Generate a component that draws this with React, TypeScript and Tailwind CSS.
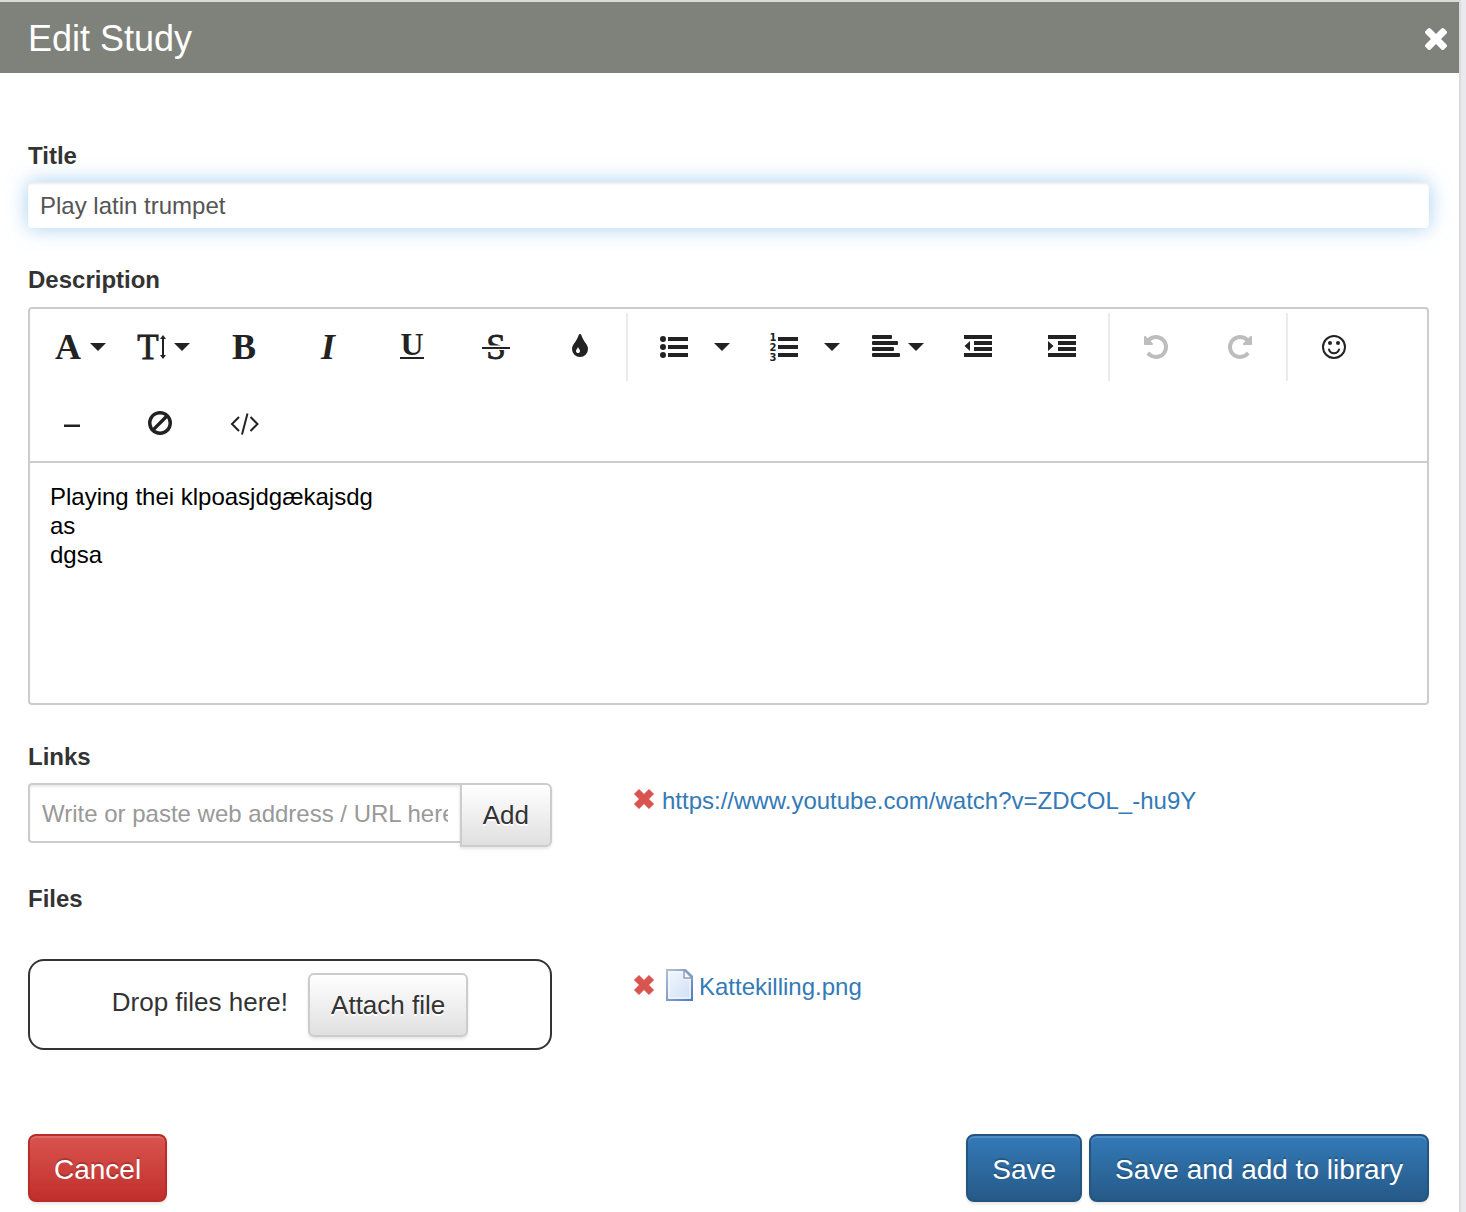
import React, { useState } from "react";

const SERIF = '"Liberation Serif", serif';

function Glyph({ children, className = "" }: { children: React.ReactNode; className?: string }) {
  return (
    <svg viewBox="0 0 28 28" aria-hidden="true" className={`h-7 w-7 shrink-0 overflow-visible fill-current ${className}`}>
      {children}
    </svg>
  );
}

// Icons drawn on the 1792-unit Font Awesome grid.
function FaGlyph({ d, flip }: { d: string; flip?: boolean }) {
  return (
    <svg viewBox="0 0 1792 1792" aria-hidden="true" className="h-7 w-7 shrink-0 fill-current">
      <path d={d} transform={flip ? "translate(1792 0) scale(-1 1)" : undefined} />
    </svg>
  );
}

const UNDO =
  "M1664 896q0 156-61 298t-164 245-245 164-298 61q-172 0-327-72.5t-264-204.5q-7-10-6.5-22.5t8.5-20.5l137-138q10-9 25-9 16 2 23 12 73 95 179 147t225 52q104 0 198.5-40.5t163.5-109.5 109.5-163.5 40.5-198.5-40.5-198.5-109.5-163.5-163.5-109.5-198.5-40.5q-98 0-188 35.5t-160 101.5l137 138q31 30 14 69-17 40-59 40h-448q-26 0-45-19t-19-45v-448q0-42 40-59 39-17 69 14l130 129q107-101 244.5-156.5t284.5-55.5q156 0 298 61t245 164 164 245 61 298z";
const TINT =
  "M896 1152q0-36-20-69-1-1-15.5-22.5t-25.5-38-25-44-21-50.5q-4-16-21-16t-21 16q-7 23-21 50.5t-25 44-25.5 38-15.5 22.5q-20 33-20 69 0 53 37.5 90.5t90.5 37.5 90.5-37.5 37.5-90.5zm512-128q0 212-150 362t-362 150-362-150-150-362q0-145 81-275 6-9 62.5-90.5t101-151 99.5-178 83-201.5q9-30 34-47t51-17 51.5 17 33.5 47q28 93 83 201.5t99.5 178 101 151 62.5 90.5q81 127 81 275z";
const BAN =
  "M1440 893q0-161-87-295l-754 753q137 89 297 89 111 0 211.5-43.5t173.5-116.5 116-174.5 43-212.5zm-999 299l755-754q-135-91-300-91-148 0-273 73t-198 199-73 274q0 162 89 299zm1223-299q0 157-61 300t-163.5 246-245 164-298.5 61-298.5-61-245-164-163.5-246-61-300 61-299.5 163.5-245.5 245-164 298.5-61 298.5 61 245 164 163.5 245.5 61 299.5z";
const TIMES =
  "M1490 1322q0 40-28 68l-136 136q-28 28-68 28t-68-28l-294-294-294 294q-28 28-68 28t-68-28l-136-136q-28-28-28-68t28-68l294-294-294-294q-28-28-28-68t28-68l136-136q28-28 68-28t68 28l294 294 294-294q28-28 68-28t68 28l136 136q28 28 28 68t-28 68l-294 294 294 294q28 28 28 68z";

function Caret() {
  return (
    <svg viewBox="0 0 16 8" aria-hidden="true" className="h-2 w-4 shrink-0 fill-current">
      <path d="M0 0h16l-8 8z" />
    </svg>
  );
}

function Tool({ label, disabled, children }: { label: string; disabled?: boolean; children: React.ReactNode }) {
  return (
    <button
      type="button"
      aria-label={label}
      disabled={disabled}
      className="flex h-[76px] w-[76px] items-center justify-center text-[#222222] disabled:text-[#bdbdbd]"
    >
      {children}
    </button>
  );
}

function DropTool({ label, children }: { label: string; children: React.ReactNode }) {
  return (
    <button type="button" aria-label={label} className="flex h-[76px] w-[76px] items-center gap-2 pl-4 text-[#222222]">
      {children}
      <Caret />
    </button>
  );
}

function SplitTool({ label, children }: { label: string; children: React.ReactNode }) {
  return (
    <div className="flex pr-1.5">
      <Tool label={label}>{children}</Tool>
      <button type="button" aria-label={`${label} options`} className="flex h-[76px] w-5 items-center justify-center text-[#222222]">
        <Caret />
      </button>
    </div>
  );
}

function Separator() {
  return <div className="h-[68px] w-0.5 bg-[#ebebeb]" />;
}

function Toolbar() {
  return (
    <div className="flex flex-wrap items-center gap-x-2 border-b-2 border-[#cccccc] px-2">
      <DropTool label="Font family">
        <Glyph>
          <text x="14" y="26" textAnchor="middle" fontFamily={SERIF} fontWeight="700" fontSize="36">A</text>
        </Glyph>
      </DropTool>
      <DropTool label="Font size">
        <Glyph>
          <text x="10" y="26" textAnchor="middle" fontFamily={SERIF} fontSize="35" stroke="currentColor" strokeWidth="0.8">T</text>
          <path d="M25 2l3 4h-2v16h2l-3 4-3-4h2V6h-2z" />
        </Glyph>
      </DropTool>
      <Tool label="Bold">
        <Glyph>
          <text x="14" y="26" textAnchor="middle" fontFamily={SERIF} fontWeight="700" fontSize="36">B</text>
        </Glyph>
      </Tool>
      <Tool label="Italic">
        <Glyph>
          <text x="14" y="26" textAnchor="middle" fontFamily={SERIF} fontWeight="700" fontStyle="italic" fontSize="36">I</text>
        </Glyph>
      </Tool>
      <Tool label="Underline">
        <Glyph>
          <text x="14" y="22" textAnchor="middle" fontFamily={SERIF} fontWeight="700" fontSize="32">U</text>
          <path d="M2 24h24v2H2z" />
        </Glyph>
      </Tool>
      <Tool label="Strikethrough">
        <Glyph>
          <text x="14" y="26" textAnchor="middle" fontFamily={SERIF} fontSize="35" stroke="currentColor" strokeWidth="0.8">S</text>
          <path d="M0 12.500h28v4.500H0z" className="fill-white" />
          <path d="M0 14h28v2H0z" />
        </Glyph>
      </Tool>
      <Tool label="Colors">
        <FaGlyph d={TINT} />
      </Tool>
      <Separator />
      <SplitTool label="Unordered list">
        <Glyph>
          <path d="M8 4h20v4H8zM8 12h20v4H8zM8 20h20v4H8z" />
          <circle cx="3" cy="6" r="3" />
          <circle cx="3" cy="14" r="3" />
          <circle cx="3" cy="22" r="3" />
        </Glyph>
      </SplitTool>
      <SplitTool label="Ordered list">
        <Glyph>
          <path d="M8 4h20v4H8zM8 12h20v4H8zM8 20h20v4H8z" />
          <g fontFamily='"DejaVu Sans", sans-serif' fontWeight="700" fontSize="10" textAnchor="middle">
            <text x="3" y="8">1</text>
            <text x="3" y="18">2</text>
            <text x="3" y="28">3</text>
          </g>
        </Glyph>
      </SplitTool>
      <DropTool label="Align">
        <Glyph>
          <rect y="2" width="20" height="4" rx="1" />
          <rect y="8" width="26" height="4" rx="1" />
          <rect y="14" width="22" height="4" rx="1" />
          <rect y="20" width="28" height="4" rx="1" />
        </Glyph>
      </DropTool>
      <Tool label="Decrease indent">
        <Glyph>
          <path d="M0 2h28v4H0zM10 8h18v4H10zM10 14h18v4H10zM0 20h28v4H0zM6 8v10L0.500 13z" />
        </Glyph>
      </Tool>
      <Tool label="Increase indent">
        <Glyph>
          <path d="M0 2h28v4H0zM10 8h18v4H10zM10 14h18v4H10zM0 20h28v4H0zM0 8v10l5.500-5z" />
        </Glyph>
      </Tool>
      <Separator />
      <Tool label="Undo" disabled>
        <FaGlyph d={UNDO} />
      </Tool>
      <Tool label="Redo" disabled>
        <FaGlyph d={UNDO} flip />
      </Tool>
      <Separator />
      <Tool label="Emoticons">
        <Glyph>
          <circle cx="14" cy="14" r="11" fill="none" stroke="currentColor" strokeWidth="2" />
          <circle cx="10" cy="10" r="2" />
          <circle cx="18" cy="10" r="2" />
          <path d="M9 16.500a5.200 5.200 0 0 0 10 0" fill="none" stroke="currentColor" strokeWidth="2" strokeLinecap="round" />
        </Glyph>
      </Tool>
      <Tool label="Insert horizontal line">
        <Glyph>
          <path d="M2 15.500h16v2.500H2z" />
        </Glyph>
      </Tool>
      <Tool label="Clear formatting">
        <FaGlyph d={BAN} />
      </Tool>
      <Tool label="Code view">
        <Glyph>
          <path d="M9 8l-7 7 7 7M20.500 8l7 7-7 7M17.500 4.500l-5.500 21" fill="none" stroke="currentColor" strokeWidth="2" />
        </Glyph>
      </Tool>
    </div>
  );
}

function RemoveButton({ label }: { label: string }) {
  return (
    <button type="button" aria-label={label} className="text-[#d9534f]">
      <svg viewBox="0 0 20 20" aria-hidden="true" className="h-5 w-5 fill-current stroke-current">
        <path d="M.5 5L5 .5l5 5 5-5L19.500 5l-5 5 5 5-4.500 4.500-5-5-5 5L.5 15l5-5z" strokeWidth="1" strokeLinejoin="round" />
      </svg>
    </button>
  );
}

function FileIcon() {
  return (
    <svg viewBox="0 0 27 32" aria-hidden="true" className="h-8 w-[27px]">
      <defs>
        <linearGradient id="sheet" x1="0" y1="0" x2="1" y2="1">
          <stop offset="0" stopColor="#f3f7fd" />
          <stop offset="1" stopColor="#cfdff6" />
        </linearGradient>
        <linearGradient id="edge" x1="0" y1="0" x2="1" y2="1">
          <stop offset="0" stopColor="#b4bfcd" />
          <stop offset="1" stopColor="#4f7cc4" />
        </linearGradient>
      </defs>
      <path d="M1 1h18.500L26 7.500V31H1z" fill="url(#sheet)" stroke="url(#edge)" strokeWidth="2" />
      <path d="M3 3h14v7h7v19H3z" fill="none" stroke="#f7faff" strokeWidth="1" />
      <path d="M18 1v8h8z" fill="#ffffff" stroke="#8d9fba" strokeWidth="1.500" />
    </svg>
  );
}

const lightButton =
  "shrink-0 border-2 border-[#cccccc] bg-gradient-to-b from-white to-[#e0e0e0] px-[21px] text-[26px] leading-15 text-[#333333] shadow-[0_2px_3px_rgba(0,0,0,0.1)] [text-shadow:0_2px_0_#fff]";
const solidButton =
  "rounded-lg border-2 px-6 pt-1 text-[28px] leading-15 text-white shadow-[inset_0_2px_0_rgba(255,255,255,0.15),0_2px_3px_rgba(0,0,0,0.1)] [text-shadow:0_-2px_0_rgba(0,0,0,0.2)]";
const blueButton = "border-[#245580] bg-gradient-to-b from-[#337ab7] to-[#265a88]";

export default function App() {
  const [title, setTitle] = useState("Play latin trumpet");
  const [url, setUrl] = useState("");

  return (
    <div className="min-h-screen bg-[#e9e9ee] pr-[5px] font-['Liberation_Sans',Arial,sans-serif] text-[#333333]">
      <div className="min-h-screen border-t-2 border-r-2 border-[#dadcdb] bg-white">
        <header className="flex items-center justify-between bg-[#7f817b] pr-3 pl-7 text-white">
          <h1 className="pt-0.5 text-[36px] leading-[69px]">Edit Study</h1>
          <button type="button" aria-label="Close" className="pt-0.5">
            <svg viewBox="302 366 1188 1188" aria-hidden="true" className="h-[22px] w-[22px] fill-current">
              <path d={TIMES} />
            </svg>
          </button>
        </header>

        <form className="pt-[67px] pr-[30px] pb-2.5 pl-7 text-2xl" onSubmit={(e) => e.preventDefault()}>
          <label htmlFor="title" className="block font-bold">Title</label>
          <input
            id="title"
            type="text"
            value={title}
            onChange={(e) => setTitle(e.target.value)}
            className="mt-2.5 block h-[46px] w-full rounded-sm px-3 pt-0.5 text-[#555555] shadow-[inset_0_2px_2px_rgba(0,0,0,0.075),0_0_20px_rgba(102,175,233,0.6)] outline-none"
          />

          <h2 id="description-label" className="mt-9 font-bold">Description</h2>
          <div className="mt-[11px] rounded-sm border-2 border-[#cccccc]">
            <Toolbar />
            <div
              role="textbox"
              aria-multiline="true"
              aria-labelledby="description-label"
              contentEditable
              suppressContentEditableWarning
              className="min-h-60 px-5 pt-[19px] pb-5 leading-[29px] text-black outline-none"
            >
              <p>Playing thei klpoasjdgækajsdg</p>
              <p>as</p>
              <p>dgsa</p>
            </div>
          </div>

          <label htmlFor="link" className="mt-9 block font-bold">Links</label>
          <div className="mt-2.5 grid grid-cols-[524fr_795fr] gap-x-[82px]">
            <div className="flex items-start">
              <input
                id="link"
                type="text"
                value={url}
                onChange={(e) => setUrl(e.target.value)}
                placeholder="Write or paste web address / URL here"
                className="h-[60px] min-w-0 flex-1 rounded-l-sm border-2 border-r-0 border-[#cccccc] px-3 pt-0.5 shadow-[inset_0_2px_2px_rgba(0,0,0,0.075)] outline-none placeholder:text-[#999999]"
              />
              <button type="button" className={`rounded-r-md ${lightButton}`}>Add</button>
            </div>
            <div className="flex items-start gap-2 pt-0.5">
              <span className="flex h-7 items-center"><RemoveButton label="Remove link" /></span>
              <a href="https://www.youtube.com/watch?v=ZDCOL_-hu9Y" className="min-w-0 text-[#337ab7]">
                https://www.youtube.com/watch?v=ZDCOL_-hu9Y
              </a>
            </div>
          </div>

          <h2 className="mt-9 font-bold">Files</h2>
          <div className="mt-11 grid grid-cols-[524fr_795fr] gap-x-[82px]">
            <div className="flex items-start justify-center gap-5 rounded-2xl border-2 border-[#333333] pt-3 pb-[11px]">
              <span className="text-[26px] leading-[59px]">Drop files here!</span>
              <button type="button" className={`rounded-md ${lightButton}`}>Attach file</button>
            </div>
            <div className="flex items-start gap-3 pt-2.5">
              <span className="flex h-8 items-center"><RemoveButton label="Remove file" /></span>
              <a href="#kattekilling" className="flex items-start gap-1.5 leading-9 text-[#337ab7]">
                <FileIcon />
                Kattekilling.png
              </a>
            </div>
          </div>

          <div className="mt-[84px] flex justify-between">
            <button type="button" className={`${solidButton} border-[#b92c28] bg-gradient-to-b from-[#d9534f] to-[#c12e2a]`}>Cancel</button>
            <div className="flex gap-[7px]">
              <button type="submit" className={`${solidButton} ${blueButton}`}>Save</button>
              <button type="button" className={`${solidButton} ${blueButton}`}>Save and add to library</button>
            </div>
          </div>
        </form>
      </div>
    </div>
  );
}
